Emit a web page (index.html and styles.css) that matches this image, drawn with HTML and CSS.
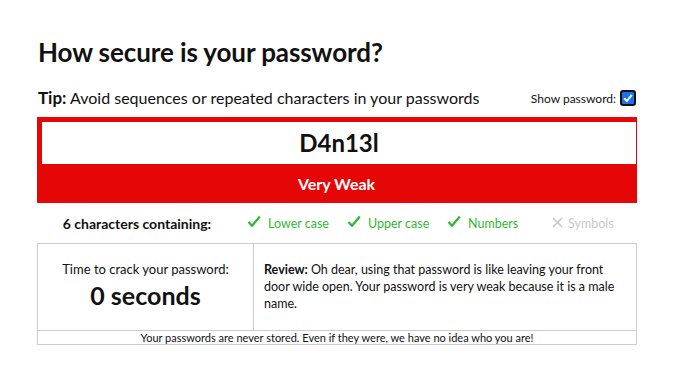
FILE: index.html
```html
<!DOCTYPE html>
<html>
<head>
<meta charset="utf-8">
<link rel="stylesheet" href="styles.css">
</head>
<body>
<div class="page">
  <h1 class="title">How secure is your password?</h1>
  <div class="tiprow">
    <div class="tip"><b>Tip:</b> Avoid sequences or repeated characters in your passwords</div>
    <label class="show">Show password: <span class="cb"><svg width="12" height="12" viewBox="0 0 12 12"><path d="M2.2 6.3 L4.9 9 L9.8 2.8" fill="none" stroke="#fff" stroke-width="2"/></svg></span></label>
  </div>
  <div class="meter">
    <div class="pw">D4n13l</div>
    <div class="rating">Very Weak</div>
  </div>
  <div class="chars">
    <div class="count">6 characters containing:</div>
    <div class="crit ok"><svg class="mark" width="14" height="13" viewBox="0 0 14 13"><path d="M1.5 7 L5 10.8 L12.8 1.5" fill="none" stroke="#33b833" stroke-width="2.3" stroke-linejoin="round"/></svg>Lower case</div>
    <div class="crit ok"><svg class="mark" width="14" height="13" viewBox="0 0 14 13"><path d="M1.5 7 L5 10.8 L12.8 1.5" fill="none" stroke="#33b833" stroke-width="2.3" stroke-linejoin="round"/></svg>Upper case</div>
    <div class="crit ok"><svg class="mark" width="14" height="13" viewBox="0 0 14 13"><path d="M1.5 7 L5 10.8 L12.8 1.5" fill="none" stroke="#33b833" stroke-width="2.3" stroke-linejoin="round"/></svg>Numbers</div>
    <div class="crit no"><svg class="mark x" width="11" height="11" viewBox="0 0 11 11"><path d="M1 1 L10 10 M10 1 L1 10" fill="none" stroke="#c8c8c8" stroke-width="1.6"/></svg>Symbols</div>
  </div>
  <div class="results">
    <div class="crack">
      <div class="crack-label">Time to crack your password:</div>
      <div class="crack-time">0 seconds</div>
    </div>
    <div class="review"><b>Review:</b> Oh dear, using that password is like leaving your front door wide open. Your password is very weak because it is a male name.</div>
    <div class="footer">Your passwords are never stored. Even if they were, we have no idea who you are!</div>
  </div>
</div>
</body>
</html>
```
FILE: styles.css
```css
* { box-sizing: border-box; }
body { margin: 0; font-family: Lato, "Open Sans", sans-serif; color: #111; background: #fff; }
.page { width: 600px; margin-left: 37px; padding-top: 34px; }
.title { margin: 0 0 0 1px; font-size: 26px; font-weight: 700; line-height: 36px; letter-spacing: -0.1px; }
.tiprow { display: flex; justify-content: space-between; align-items: flex-end; margin-top: 14px; height: 33px; padding-bottom: 9px; }
.tip { font-size: 16px; padding-left: 1px; }
.tip b { font-size: 17px; }
.show { font-size: 12px; display: flex; align-items: center; gap: 4px; margin-bottom: 2px; }
.cb { width: 16px; height: 16px; border: 2px solid #111; border-radius: 3px; background: #1a73e8; display: flex; align-items: center; justify-content: center; margin-right: 1px; }
.meter { background: #e50707; padding: 5px 1px 0 5px; }
.pw { background: #fff; height: 42px; font-size: 24px; font-weight: 700; text-align: center; line-height: 42px; }
.rating { height: 39px; color: #fff; font-weight: 700; font-size: 16px; text-align: center; line-height: 40px; margin-left: -5px; }
.chars { display: grid; grid-template-columns: 200px 100px 100px 100px 100px; height: 40px; align-items: center; font-size: 12.5px; }
.count { font-weight: 700; font-size: 14px; text-align: center; }
.crit { padding-left: 10px; display: flex; align-items: center; }
.ok { color: #33b833; }
.no { color: #c8c8c8; }
.mark { margin-right: 7px; margin-top: -3px; }
.mark.x { margin-left: 5px; margin-right: 5px; margin-top: -1px; }
.results { display: grid; grid-template-columns: 216px 1fr; border: 1px solid #ccc; }
.crack { height: 86px; border-right: 1px solid #ccc; text-align: center; padding-top: 16px; }
.crack-label { font-size: 13px; line-height: 18px; }
.crack-time { font-size: 25px; font-weight: 700; line-height: 32px; margin-top: 1px; }
.review { font-size: 12.5px; line-height: 17px; padding: 17px 8px 0 10px; }
.footer { grid-column: 1 / 3; border-top: 1px solid #ccc; font-size: 11px; text-align: center; height: 14px; line-height: 13px; }
```
